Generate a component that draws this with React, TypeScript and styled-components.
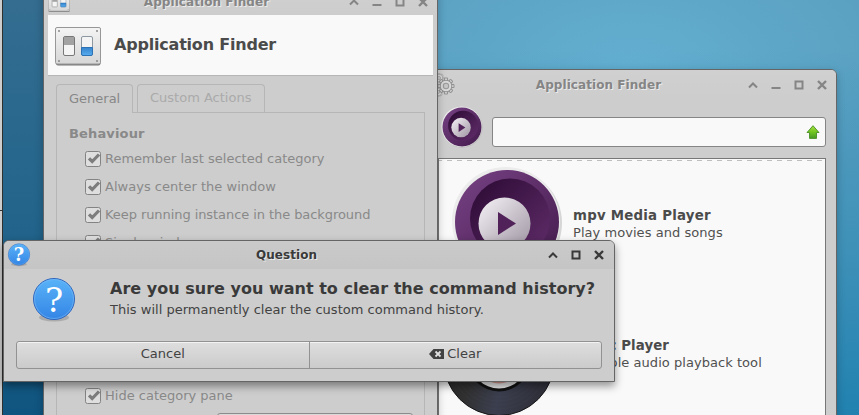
import React from "react";
import styled, { createGlobalStyle, css } from "styled-components";

const GlobalStyle = createGlobalStyle`
  *, *::before, *::after { box-sizing: border-box; }
  html, body { margin: 0; overflow: hidden; }
  body { font: 13px/16px "DejaVu Sans", sans-serif; color: #4b4b4b; }
  svg { display: block; flex: none; }
`;

const Desktop = styled.main`
  position: relative;
  width: 859px;
  height: 415px;
  overflow: hidden;
  background:
    linear-gradient(180deg, #346d90 0%, #24658c 50%, #0f5580 100%) 0 0 / 44px 100% no-repeat,
    linear-gradient(180deg, rgba(30, 128, 175, 0) 12%, rgba(30, 128, 175, 0.45) 60%, rgba(30, 128, 175, 0.95) 100%),
    radial-gradient(ellipse 270px 150px at 630px 65px, #63afd1, #5a9fc0 100%);
`;

const EdgePanel = styled.div`
  position: absolute;
  inset: 0 auto 0 0;
  width: 3px;
  background: linear-gradient(#333, #333) 0 210px / 3px 1px no-repeat, #cdcdcd;
  border-right: 1px solid #30302f;
`;

const Window = styled.section<{ $x: number; $y: number; $w: number; $h: number; $active?: boolean }>`
  position: absolute;
  left: ${(p) => p.$x}px;
  top: ${(p) => p.$y}px;
  width: ${(p) => p.$w}px;
  height: ${(p) => p.$h}px;
  display: flex;
  flex-direction: column;
  background: #cdcdcd;
  border: 1px solid #656565;
  border-radius: 6px 6px 0 0;
  box-shadow: ${(p) => (p.$active ? "0 4px 9px rgba(0,0,0,.42)" : "0 3px 8px rgba(0,0,0,.24)")};
`;

const TitleBar = styled.header<{ $active?: boolean; $pad: string }>`
  flex: none;
  display: flex;
  align-items: center;
  height: 28px;
  padding: ${(p) => p.$pad};
  font-size: 12px;
  font-weight: bold;
  border-radius: 5px 5px 0 0;
  color: ${(p) => (p.$active ? "#3a3a3a" : "#858585")};
  background: ${(p) => (p.$active ? "linear-gradient(#cacaca, #c5c5c5)" : "linear-gradient(#d0d0d0, #cdcdcd)")};
`;

const Title = styled.h1<{ $shift: number }>`
  flex: 1;
  margin: 0;
  padding-right: ${(p) => p.$shift}px;
  font: inherit;
  letter-spacing: 0.06px;
  text-align: center;
  white-space: nowrap;
  text-shadow: 1px 1px 0 #ebebeb;
`;

const Controls = styled.div`
  display: flex;
  gap: 13px;
`;

const glyphs = {
  shade: <path d="M1 7.5 5 3.5 9 7.5" />,
  minimize: <path d="M.5 8h9" />,
  maximize: <path d="M1.500 1.500h7v7h-7z" />,
  close: <path d="m1 1 8 8M9 1 1 9" />,
};

const Glyph = ({ kind }: { kind: keyof typeof glyphs }) => (
  <svg width="10" height="10" viewBox="0 0 10 10" fill="none" stroke="currentColor" strokeWidth={kind === "close" ? 2.4 : 2}>
    {glyphs[kind]}
  </svg>
);

/* Settings window */

const Banner = styled.div`
  flex: none;
  display: flex;
  align-items: center;
  gap: 13px;
  height: 61px;
  margin: 0 4px;
  padding: 2px 7px 0;
  background: #f9f9f9;
  border-bottom: 1px solid #b5b5b5;
`;

const BannerTitle = styled.h2`
  margin: 0 0 3px;
  font-size: 16px;
  line-height: 20px;
  letter-spacing: -0.2px;
  white-space: nowrap;
`;

const Tabs = styled.div`
  flex: none;
  display: flex;
  gap: 4px;
  height: 29px;
  margin: 8px 12px -1px;
`;

const Tab = styled.div<{ $selected?: boolean; $w: number }>`
  width: ${(p) => p.$w}px;
  padding: 5px 0 0 12px;
  border: 1px solid #b6b6b6;
  border-bottom: 0;
  border-radius: 4px 4px 0 0;
  color: ${(p) => (p.$selected ? "#878787" : "#aaa")};
  ${(p) =>
    p.$selected
      ? css`
          background: #cdcdcd;
          padding-top: 6px;
          z-index: 1;
        `
      : css`
          height: 28px;
        `}
`;

const Pane = styled.div`
  flex: 1;
  margin: 0 12px;
  padding: 13px 12px;
  border: 1px solid #b6b6b6;
  color: #898989;
`;

const GroupTitle = styled.h3`
  margin: 0;
  font-size: 13px;
  line-height: 16px;
  letter-spacing: 0.15px;
`;

const OptionList = styled.ul`
  display: flex;
  flex-direction: column;
  gap: 12px;
  margin: 0;
  padding: 9px 0 0 16px;
  list-style: none;
`;

const Option = styled.li<{ $tracking?: number }>`
  display: flex;
  align-items: center;
  gap: 4px;
  height: 16px;
  letter-spacing: ${(p) => p.$tracking ?? 0}px;
  white-space: nowrap;
`;

const LowerOptions = styled(OptionList)`
  padding-top: 137px;
  gap: 9px;
`;

const Combo = styled.div`
  width: 196px;
  height: 28px;
  margin-left: 132px;
  border: 1px solid #8b8b8b;
  border-radius: 3px;
  background: #d9d9d9;
`;

const CheckBox = () => (
  <svg width="16" height="16" viewBox="0 0 16 16">
    <rect x=".5" y=".5" width="15" height="15" rx="2" fill="#dedede" stroke="#838383" />
    <path d="M4 7.300 7.200 10.500 14 3.500" fill="none" stroke="#7d7d7d" strokeWidth="3.200" />
  </svg>
);

const SwitchesIcon = ({ width, height }: { width: number; height: number }) => (
  <svg width={width} height={height} viewBox="0 0 46 39" preserveAspectRatio="none">
    <defs>
      <linearGradient id="plate" x2="0" y2="1">
        <stop stopColor="#f4f4f4" />
        <stop offset="1" stopColor="#d6d6d6" />
      </linearGradient>
      <linearGradient id="blue" x2="0" y2="1">
        <stop stopColor="#3583cc" />
        <stop offset="1" stopColor="#58adef" />
      </linearGradient>
    </defs>
    <rect x="1" y="2" width="44.5" height="36.5" rx="2" fill="#777" />
    <rect x=".5" y=".5" width="45" height="36.5" rx="1.5" fill="url(#plate)" stroke="#979797" />
    <g fill="#888">
      <circle cx="4" cy="4" r="1" /><circle cx="42" cy="4" r="1" />
      <circle cx="4" cy="34" r="1" /><circle cx="42" cy="34" r="1" />
    </g>
    <rect x="8.5" y="9.5" width="11" height="19" rx="1.5" fill="#f4f4f4" stroke="#777" />
    <path d="M9 10h10v8H9z" fill="#a2a2a2" />
    <rect x="26.5" y="9.5" width="11" height="19" rx="1.5" fill="#f4f4f4" stroke="#8d98a3" />
    <path d="M26.5 20.5h11V27q0 1.500-1.500 1.500h-8q-1.500 0-1.500-1.500z" fill="url(#blue)" stroke="#2c72b4" />
  </svg>
);

/* Finder window */

const SearchRow = styled.div`
  flex: none;
  display: flex;
  align-items: center;
  height: 60px;
  padding: 0 10px 0 4px;
  gap: 8px;
`;

const FinderLogo = styled.div`
  width: 49px;
  padding: 0 0 2px 6px;
`;

const SearchField = styled.div`
  flex: 1;
  display: flex;
  align-items: center;
  justify-content: flex-end;
  height: 30px;
  margin-top: 8px;
  padding-right: 5px;
  background: #f9f9f9;
  border: 1px solid #858585;
  border-radius: 3px;
`;

const Results = styled.div`
  flex: 1;
  min-height: 0;
  overflow: hidden;
  margin: 0 10px 0 7px;
  padding-left: 12px;
  border: 1px solid #777;
  border-bottom: 0;
  background:
    repeating-linear-gradient(90deg, #bebebe 0 3px, transparent 3px 8px, #bebebe 8px 10px) 0 1px / 100% 1px no-repeat,
    #f9f9f9;
`;

const Result = styled.article`
  display: flex;
  align-items: center;
  height: 130px;
  gap: 10px;
`;

const Artwork = styled.div<{ $margin: string }>`
  margin: ${(p) => p.$margin};
`;

const ResultText = styled.div`
  line-height: 17px;
  letter-spacing: 0.05px;
  white-space: nowrap;
  color: #505050;
`;

const Name = styled.strong<{ $tracking: number }>`
  display: block;
  font-size: 13.333px;
  letter-spacing: ${(p) => p.$tracking}px;
  color: #4b4b4b;
`;

const MpvIcon = ({ size }: { size: number }) => (
  <svg width={size} height={size} viewBox="0 0 112 112">
    <defs>
      <linearGradient id="mpvOuter" x2="1" y2="1">
        <stop stopColor="#784285" /><stop offset="1" stopColor="#421a4b" />
      </linearGradient>
      <linearGradient id="mpvInner" x2="1" y2="1">
        <stop offset=".1" stopColor="#300d38" /><stop offset="1" stopColor="#622e6c" />
      </linearGradient>
      <linearGradient id="mpvDisc" x2="1" y2="1">
        <stop offset=".1" stopColor="#eee9ef" /><stop offset="1" stopColor="#9d94a1" />
      </linearGradient>
    </defs>
    <circle cx="57" cy="57" r="54" fill="#aaa" opacity=".45" />
    <circle cx="55" cy="55" r="54" fill="#ececec" />
    <circle cx="56" cy="56" r="52" fill="url(#mpvOuter)" />
    <circle cx="59" cy="52.500" r="40" fill="url(#mpvInner)" />
    <circle cx="53.500" cy="57.500" r="26" fill="url(#mpvDisc)" />
    <path d="M47 46v23l18-11.500z" fill="#512259" />
  </svg>
);

const RecordIcon = () => (
  <svg width="112" height="112" viewBox="0 0 112 112">
    <defs>
      <linearGradient id="vinyl" x2="1" y2=".3">
        <stop stopColor="#252525" /><stop offset=".4" stopColor="#303030" />
        <stop offset=".68" stopColor="#3b3e4e" /><stop offset="1" stopColor="#30313b" />
      </linearGradient>
    </defs>
    <circle cx="56" cy="56" r="55.500" fill="url(#vinyl)" stroke="#171719" />
    <g fill="none" stroke="#53545c" strokeWidth=".5" opacity=".25">
      <circle cx="56" cy="56" r="49" /><circle cx="56" cy="56" r="45" />
      <circle cx="56" cy="56" r="41" /><circle cx="56" cy="56" r="37" />
    </g>
    <circle cx="56" cy="56" r="31.500" fill="#111" />
    <circle cx="56" cy="56" r="28.500" fill="#e7e7e7" />
    <circle cx="56" cy="56" r="23.500" fill="#d99c91" />
  </svg>
);

const UpArrow = () => (
  <svg width="14" height="14" viewBox="0 0 14 14">
    <defs>
      <linearGradient id="arrow" x2="0" y2="1">
        <stop stopColor="#a5dc43" /><stop offset=".5" stopColor="#72c620" /><stop offset="1" stopColor="#459727" />
      </linearGradient>
    </defs>
    <path d="M7 .7 13 7.500h-2.500v5.900h-7V7.500H1z" fill="url(#arrow)" stroke="#478f24" strokeWidth=".9" />
  </svg>
);

const gearTeeth = Array.from({ length: 8 }, (_, i) => i * 45);

const Gear = ({ x, y, r }: { x: number; y: number; r: number }) => (
  <g transform={`translate(${x} ${y}) scale(${r / 8})`}>
    {gearTeeth.map((angle) => (
      <rect key={angle} x="-1.500" y="-7.700" width="3" height="4" rx=".5" fill="#d9d9d9" stroke="#929292" transform={`rotate(${angle})`} />
    ))}
    <circle r="5.600" fill="#d9d9d9" stroke="#929292" />
    <circle r="4.900" fill="#d9d9d9" />
    <circle r="2.600" fill="#c5c5c5" stroke="#999" />
  </g>
);

const Gears = () => (
  <svg width="18" height="24" viewBox="0 0 18 24" fill="none">
    <Gear x={1} y={5} r={5} />
    <Gear x={0} y={19} r={5} />
    <Gear x={8} y={13} r={8.3} />
  </svg>
);

/* Confirmation dialog */

const Message = styled.div`
  display: flex;
  gap: 33px;
  height: 72px;
  padding: 8px 0 0 27px;
`;

const MessageText = styled.div`
  padding-top: 2px;
  color: #424242;
  letter-spacing: 0.015px;
  white-space: nowrap;
`;

const Question = styled.h2`
  margin: 0 0 3px;
  color: #3a3a3a;
  font-size: 16px;
  line-height: 20px;
`;

const ButtonRow = styled.div`
  display: flex;
  height: 28px;
  margin: 0 12px;
  border: 1px solid #929292;
  border-radius: 3px;
  background: linear-gradient(#dedede, #cbcbcb);
  box-shadow: inset 0 1px #f3f3f3;
`;

const Button = styled.button`
  flex: 1;
  display: flex;
  align-items: center;
  justify-content: center;
  gap: 3px;
  margin: 0;
  padding: 0 0 2px;
  border: 0;
  background: none;
  font: inherit;
  color: #424242;

  & + & {
    border-left: 1px solid #929292;
  }
`;

const HelpIcon = ({ size }: { size: number }) => (
  <svg width={size} height={size} viewBox="0 0 46 46">
    <defs>
      <linearGradient id="help" x2="0" y2="1">
        <stop stopColor="#5ab3f8" /><stop offset="1" stopColor="#3485e5" />
      </linearGradient>
    </defs>
    <ellipse cx="23" cy="40.500" rx="15" ry="4" fill="#777" opacity=".4" />
    <circle cx="23" cy="22" r="20.500" fill="url(#help)" stroke="#2f67bd" />
    <circle cx="23" cy="22" r="19.500" fill="none" stroke="#7abbf6" opacity=".6" />
    <text x="23" y="34.500" textAnchor="middle" fontFamily="DejaVu Serif, serif" fontSize="34" fill="#fff">?</text>
  </svg>
);

const BackspaceIcon = () => (
  <svg width="15" height="10" viewBox="0 0 15 10">
    <path d="M0 5 4.500 0H15v10H4.500z" fill="#424242" />
    <path d="m6.500 2.500 5 5m0-5-5 5" stroke="#e2e2e2" strokeWidth="1.800" />
  </svg>
);

const options = [
  { label: "Remember last selected category", tracking: 0 },
  { label: "Always center the window", tracking: 0.02 },
  { label: "Keep running instance in the background", tracking: -0.07 },
  { label: "Single window", tracking: 0 },
];

export default function App() {
  return (
    <>
      <GlobalStyle />
      <Desktop>
        <EdgePanel />

        <Window $x={430} $y={69} $w={407} $h={360}>
          <TitleBar $pad="1px 9px 0 7px">
            <Gears />
            <Title $shift={7}>Application Finder</Title>
            <Controls>
              <Glyph kind="shade" /><Glyph kind="minimize" /><Glyph kind="maximize" /><Glyph kind="close" />
            </Controls>
          </TitleBar>
          <SearchRow>
            <FinderLogo><MpvIcon size={42} /></FinderLogo>
            <SearchField><UpArrow /></SearchField>
          </SearchRow>
          <Results>
            <Result>
              <Artwork $margin="-4px 0 0"><MpvIcon size={112} /></Artwork>
              <ResultText><Name $tracking={0.24}>mpv Media Player</Name>Play movies and songs</ResultText>
            </Result>
            <Result>
              <Artwork $margin="12px 8px 0 -8px"><RecordIcon /></Artwork>
              <ResultText><Name $tracking={0.08}>Music Player</Name>A simple audio playback tool</ResultText>
            </Result>
          </Results>
        </Window>

        <Window $x={43} $y={-14} $w={395} $h={460}>
          <TitleBar $pad="2px 9px 0 4px">
            <SwitchesIcon width={22} height={19} />
            <Title $shift={6}>Application Finder</Title>
            <Controls>
              <Glyph kind="shade" /><Glyph kind="minimize" /><Glyph kind="maximize" /><Glyph kind="close" />
            </Controls>
          </TitleBar>
          <Banner>
            <SwitchesIcon width={46} height={39} />
            <BannerTitle>Application Finder</BannerTitle>
          </Banner>
          <Tabs>
            <Tab $selected $w={77}>General</Tab>
            <Tab $w={128}>Custom Actions</Tab>
          </Tabs>
          <Pane>
            <GroupTitle>Behaviour</GroupTitle>
            <OptionList>
              {options.map(({ label, tracking }) => (
                <Option key={label} $tracking={tracking}><CheckBox />{label}</Option>
              ))}
            </OptionList>
            <LowerOptions>
              <Option><CheckBox />Hide category pane</Option>
              <Combo />
            </LowerOptions>
          </Pane>
        </Window>

        <Window $x={3} $y={240} $w={612} $h={142} $active>
          <TitleBar $active $pad="0 10px 0 3px">
            <HelpIcon size={24} />
            <Title $shift={6}>Question</Title>
            <Controls>
              <Glyph kind="shade" /><Glyph kind="maximize" /><Glyph kind="close" />
            </Controls>
          </TitleBar>
          <Message>
            <HelpIcon size={46} />
            <MessageText>
              <Question>Are you sure you want to clear the command history?</Question>
              This will permanently clear the custom command history.
            </MessageText>
          </Message>
          <ButtonRow>
            <Button>Cancel</Button>
            <Button><BackspaceIcon />Clear</Button>
          </ButtonRow>
        </Window>
      </Desktop>
    </>
  );
}
